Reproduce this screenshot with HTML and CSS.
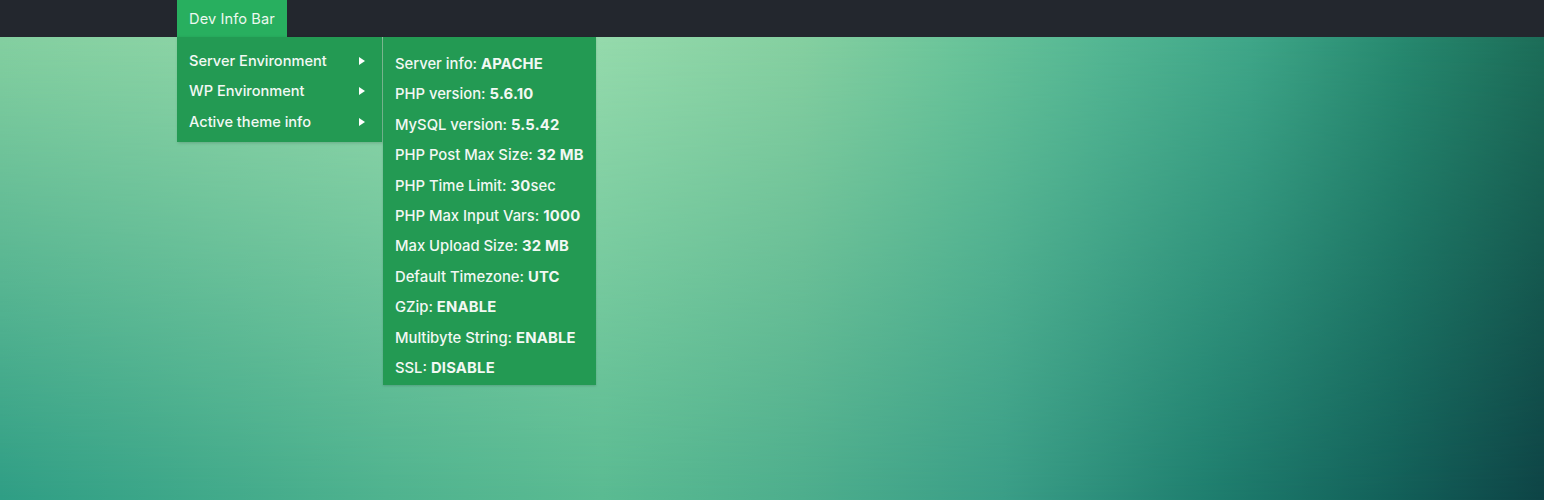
FILE: index.html
```html
<!DOCTYPE html>
<html>
<head>
<meta charset="utf-8">
<link rel="stylesheet" href="styles.css">
</head>
<body>
<div class="page">
  <header class="topbar">
    <div class="menu-item">
      <span class="menu-label">Dev Info Bar</span>
      <ul class="dropdown">
        <li class="drop-row"><span>Server Environment</span><span class="arrow"></span>
          <ul class="submenu">
            <li>Server info: <b>APACHE</b></li>
            <li>PHP version: <b>5.6.10</b></li>
            <li>MySQL version: <b>5.5.42</b></li>
            <li>PHP Post Max Size: <b>32 MB</b></li>
            <li>PHP Time Limit: <b>30</b>sec</li>
            <li>PHP Max Input Vars: <b>1000</b></li>
            <li>Max Upload Size: <b>32 MB</b></li>
            <li>Default Timezone: <b>UTC</b></li>
            <li>GZip: <b>ENABLE</b></li>
            <li>Multibyte String: <b>ENABLE</b></li>
            <li>SSL: <b>DISABLE</b></li>
          </ul>
        </li>
        <li class="drop-row"><span>WP Environment</span><span class="arrow"></span></li>
        <li class="drop-row"><span>Active theme info</span><span class="arrow"></span></li>
      </ul>
    </div>
  </header>
  <main class="canvas"></main>
</div>
</body>
</html>
```
FILE: styles.css
```css
html, body {
  margin: 0;
  padding: 0;
}
body {
  font-family: Inter, "Liberation Sans", sans-serif;
  color: #f2f8f3;
}
.page {
  position: relative;
  width: 1544px;
  height: 500px;
  display: flex;
  flex-direction: column;
  background: linear-gradient(90deg, #2f9e85 0%, #4fb38f 25%, #5abb92 39%, #4dae8d 52%, #3a9e87 65%, #1f7f6f 78%, #13615a 90%, #0e4446 100%);
}
.page::before {
  content: "";
  position: absolute;
  left: 0;
  right: 0;
  top: 37px;
  bottom: 0;
  background: linear-gradient(90deg, #84cfa0 0%, #90d6a8 20%, #98dcae 36%, #85cfa0 52%, #6cc59a 61.5%, #55b793 71%, #3fa688 81%, #27896f 90.7%, #1c6d58 100%);
  -webkit-mask-image: linear-gradient(180deg, #000 0%, rgba(0, 0, 0, 0) 100%);
  mask-image: linear-gradient(180deg, #000 0%, rgba(0, 0, 0, 0) 100%);
}
.topbar {
  height: 37px;
  background: #23272e;
  display: flex;
  padding-left: 177px;
  position: relative;
  z-index: 2;
}
.menu-item {
  position: relative;
  background: #28af5f;
  display: flex;
  align-items: center;
  padding: 0 12px;
}
.menu-label {
  font-size: 14.6px;
  color: #edf8ef;
  letter-spacing: 0.1px;
}
.dropdown {
  position: absolute;
  top: 37px;
  left: 0;
  width: 205px;
  margin: 0;
  padding: 8.5px 0 4.5px;
  list-style: none;
  background: #239a53;
  box-shadow: 1px 1px 3px rgba(0, 0, 0, 0.18);
}
.drop-row {
  display: flex;
  align-items: center;
  justify-content: space-between;
  height: 30.5px;
  padding: 0 17px 0 12px;
  font-size: 14.6px;
  font-weight: 500;
}
.arrow {
  width: 0;
  height: 0;
  border-top: 4px solid transparent;
  border-bottom: 4px solid transparent;
  border-left: 6px solid #ffffff;
}
.submenu {
  position: absolute;
  top: 0;
  left: 206px;
  width: 213px;
  margin: 0;
  padding: 12px 0 2px;
  list-style: none;
  background: #239a53;
  box-shadow: 0 1px 2px rgba(0, 0, 0, 0.15);
}
.submenu li {
  height: 30.4px;
  line-height: 30.4px;
  padding-left: 12px;
  font-size: 14.8px;
  font-weight: 500;
  white-space: nowrap;
}
.submenu b {
  font-weight: 700;
  letter-spacing: 0.2px;
}
.canvas {
  flex: 1;
}
```
